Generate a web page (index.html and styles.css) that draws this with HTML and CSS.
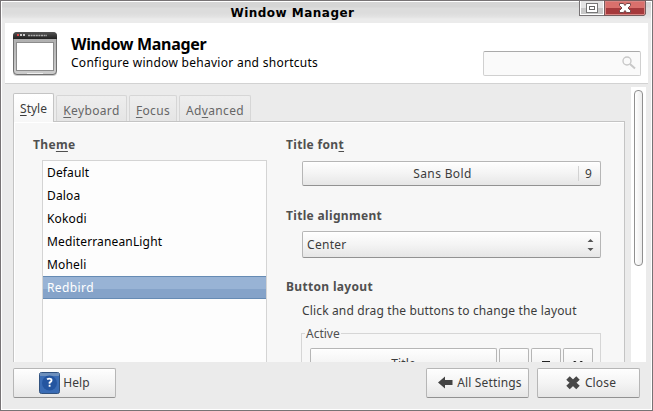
FILE: index.html
```html
<!DOCTYPE html>
<html lang="en">
<head>
<meta charset="utf-8">
<title>Window Manager</title>
<link rel="stylesheet" href="styles.css">
</head>
<body>
<div class="window">
  <header class="titlebar">
    <span class="caption">Window Manager</span>
    <div class="controls">
      <svg class="maximize" width="26" height="16" viewBox="0 0 26 16" shape-rendering="crispEdges">
        <rect width="26" height="16" fill="#777375"/><rect x="1" y="1" width="24" height="14" fill="#fff"/>
        <rect x="2" y="1" width="22" height="7" fill="#e4e4e4"/><rect x="2" y="8" width="22" height="6" fill="#c8c8c8"/>
        <rect x="7.500" y="3.500" width="11" height="9" fill="#fff" stroke="#777"/>
        <rect x="10.500" y="6.500" width="5" height="3" fill="#fff" stroke="#666"/>
      </svg>
      <svg class="close" width="42" height="16" viewBox="0 0 42 16">
        <path d="M0 0H42V14L40 16H0Z" fill="#765d5d"/>
        <path d="M1 1H41V14L40 15H1Z" fill="#d98583"/>
        <path d="M2 2H40V8H2Z" fill="#d9706c"/><path d="M2 8H40V14H2Z" fill="#a63a3c"/>
        <path d="M15.500 3.500h4l1.500 2 1.500-2h4v2L24 8l2.500 2.500v2h-4l-1.500-2-1.500 2h-4v-2L18 8 15.500 5.500z" fill="#fff" stroke="#74494b"/>
      </svg>
    </div>
  </header>
  <section class="heading">
    <svg class="app-icon" width="46" height="46" viewBox="0 0 46 46">
      <defs><linearGradient id="frame" x2="0" y2="1"><stop stop-color="#aaa"/><stop offset="1" stop-color="#ccc"/></linearGradient>
      <linearGradient id="bar" x2="0" y2="1"><stop stop-color="#555"/><stop offset="1" stop-color="#202020"/></linearGradient></defs>
      <rect x="1" y="1" width="44" height="44" rx="4" fill="#999" opacity=".5"/>
      <rect x="1.500" y="1.500" width="43" height="42" rx="3.500" fill="url(#frame)" stroke="#707070"/>
      <path d="M1 8V5q0-4 4-4H41q4 0 4 4v3z" fill="url(#bar)"/>
      <rect x="4.500" y="11.500" width="37" height="28" fill="#fff" stroke="#8c8c8c"/>
      <rect x="5" y="3" width="2" height="2" fill="#d44"/><rect x="8" y="3" width="2" height="2" fill="#ccc"/><rect x="11" y="3" width="2" height="2" fill="#ccc"/>
      <path d="M16 4.500H35" stroke="#aaa" stroke-width="1.400" stroke-dasharray="2 .6"/>
      <path d="M15 42.500H31" stroke="#eee"/>
    </svg>
    <div class="intro">
      <h1>Window Manager</h1>
      <p>Configure window behavior and shortcuts</p>
    </div>
    <div class="search">
      <svg width="16" height="16" viewBox="0 0 16 16" fill="none" stroke="#c8c8c8"><circle cx="6" cy="5" r="4" stroke-width="1.400"/><path d="M9 8l5 4.500" stroke-width="2"/></svg>
    </div>
  </section>
  <main class="viewport">
    <div class="notebook">
      <nav class="tabs">
        <span class="tab active"><u>S</u>tyle</span>
        <span class="tab keyboard"><u>K</u>eyboard</span>
        <span class="tab focus"><u>F</u>ocus</span>
        <span class="tab advanced">Ad<u>v</u>anced</span>
      </nav>
      <div class="page">
        <section class="themes">
          <h2>The<u>m</u>e</h2>
          <ul>
            <li>Default</li><li>Daloa</li><li>Kokodi</li><li>MediterraneanLight</li><li>Moheli</li><li class="selected">Redbird</li>
          </ul>
        </section>
        <section class="options">
          <h2>Title fon<u>t</u></h2>
          <div class="button font"><span class="font-name">Sans Bold</span><span class="font-size">9</span></div>
          <h2>Title alignment</h2>
          <div class="button combo"><span>Center</span>
            <svg width="7" height="12" viewBox="0 0 7 12" fill="#555"><path d="M3.500 0L6.500 3H.5zM.5 9H6.500L3.500 12z"/></svg>
          </div>
          <h2>Button layout</h2>
          <p class="hint">Click and drag the buttons to change the layout</p>
          <fieldset>
            <legend>Active</legend>
            <div class="slots">
              <span class="button slot title">Title</span>
              <span class="button slot"></span>
              <span class="button slot"><svg width="8" height="8" viewBox="0 0 8 8"><path d="M0 0H8V8H0z M1 2V7H7V2z" fill="#222" fill-rule="evenodd"/></svg></span>
              <span class="button slot"><svg width="10" height="9" viewBox="0 0 10 9"><path d="M1 0L9 8M9 0L1 8" stroke="#222" stroke-width="2"/></svg></span>
            </div>
          </fieldset>
        </section>
      </div>
    </div>
    <div class="scrollbar"><div class="thumb"></div></div>
  </main>
  <footer class="actions">
    <div class="button action help">
      <svg width="21" height="22" viewBox="0 0 21 22"><rect x=".5" y=".5" width="20" height="21" rx="2" fill="#3a6cb5" stroke="#31527f"/><path d="M1 1H20V4H1z" fill="#6c8fbd"/><circle cx="10.500" cy="11" r="7.500" fill="#2455a0"/><path d="M8 7.300q2.500-1.500 4.300 0 1 1.800-1.700 3.200v1.200M10.600 12.700v2" fill="none" stroke="#fff" stroke-width="1.800"/></svg>
      <span>Help</span>
    </div>
    <div class="button action all">
      <svg width="16" height="14" viewBox="0 0 16 14"><path d="M1 6.500L8 .5V4H15.500V9H8V12.500z" fill="#444"/></svg>
      <span>All Settings</span>
    </div>
    <div class="button action shut">
      <svg width="16" height="16" viewBox="0 0 16 16"><path d="M3 3L13 12.500M13 3L3 12.500" stroke="#484848" stroke-width="5"/></svg>
      <span>Close</span>
    </div>
  </footer>
</div>
</body>
</html>
```
FILE: styles.css
```css
* { box-sizing: border-box; }
body { margin: 0; font: 12px/16px "Noto Sans", "Open Sans", sans-serif; letter-spacing: .15px; color: #3c3c3c; overflow: hidden; }
h1, h2, p, ul, fieldset { margin: 0; padding: 0; }
svg { display: block; flex: none; }
u { text-decoration: underline; text-decoration-thickness: 1px; text-underline-offset: 2px; text-decoration-skip-ink: none; }
.window { width: 653px; height: 411px; border: 1px solid #777375; background: #ebebeb; box-shadow: inset 0 0 0 1px #fff; display: flex; flex-direction: column; }
.titlebar { position: relative; height: 22px; margin: 0 1px; background: linear-gradient(#fff 1px, #d5d5d5 1px 6px, #dcdcdc 7px 12px, #e3e3e3 16px, #ebebeb 18px); }
.caption { display: block; text-align: center; font: bold 12px/24px "DejaVu Sans", sans-serif; letter-spacing: .48px; color: #000; width: 581px; }
.controls { position: absolute; right: 5px; top: -1px; display: flex; }
.maximize { margin-right: -1px; }
.heading { margin: 0 4px; height: 61px; background: #fff; border-bottom: 1px solid #d2d2d2; display: flex; padding: 8px 7px 0 7px; color: #000; white-space: nowrap; }
.intro { margin-left: 13px; padding-top: 4px; flex: 1; }
.intro p { margin-top: 1px; letter-spacing: .28px; }
h1 { font-size: 16px; line-height: 19px; letter-spacing: -.32px; }
.search { width: 158px; height: 25px; margin-top: 20px; border: 1px solid #d0d0d0; border-top-color: #aaa; border-radius: 2px; background: #fafafa; display: flex; justify-content: flex-end; padding: 4px 3px; }
.viewport { height: 278px; overflow: hidden; display: flex; justify-content: space-between; padding: 3px 6px 0 12px; }
.notebook { width: 612px; padding-top: 6px; }
.tabs { display: flex; align-items: flex-end; height: 29px; position: relative; z-index: 1; color: #666; }
.tab { height: 26px; border: 1px solid #d6d6d6; border-bottom: 0; border-radius: 2px 2px 0 0; background: linear-gradient(#eee, #e5e5e5); line-height: 29px; text-align: center; margin-right: 2px; margin-bottom: 1px; white-space: nowrap; letter-spacing: .35px; }
.tab.active { width: 41px; height: 29px; margin-bottom: 0; background: linear-gradient(#fff, #f7f7f7); border-color: #c4c4c4; color: #3c3c3c; line-height: 29px; letter-spacing: 0; }
.keyboard { width: 71px; }
.focus { width: 48px; }
.advanced { width: 72px; }
.page { margin-top: -1px; height: 260px; border: 1px solid #c4c4c4; box-shadow: inset 1px 1px #fff; background: #f7f7f7; display: flex; padding: 15px 23px 0 19px; }
h2 { font-size: 12px; line-height: 16px; letter-spacing: .33px; color: #505050; white-space: nowrap; }
.themes { width: 234px; margin-right: 19px; }
.themes ul { margin: 7px 0 0 9px; height: 230px; border: 1px solid #d4d4d4; background: #fdfdfd; list-style: none; color: #000; }
.themes li { height: 23px; line-height: 23px; padding-left: 4px; }
.themes .selected { color: #fff; background: linear-gradient(#98b3d5 0 12px, #85a3c9 12px); border: solid #668bb4; border-width: 1px 0; line-height: 21px; letter-spacing: .4px; }
.options { flex: 1; white-space: nowrap; }
.button { border: 1px solid #b6b6b6; border-bottom-color: #929292; border-radius: 2px; background: linear-gradient(#fefefe, #f4f4f4 50%, #e6e6e6); box-shadow: inset 0 1px #fff; display: flex; align-items: center; }
.font { height: 25px; margin: 8px 0 22px 16px; }
.font-name { flex: 1; text-align: center; letter-spacing: .35px; padding-left: 4px; }
.font-size { width: 22px; height: 15px; line-height: 15px; border-left: 1px solid #d2d2d2; padding-left: 6px; }
.combo { height: 27px; margin: 7px 0 21px 16px; padding: 0 6px 0 4px; justify-content: space-between; letter-spacing: .3px; }
.hint { margin: 8px 0 6px 16px; }
fieldset { margin-left: 15px; border: 1px solid #d6d6d6; height: 60px; min-width: 0; }
legend { padding: 0 1px; margin-left: 3px; height: 16px; line-height: 18px; color: #505050; letter-spacing: 0; }
.slots { display: flex; gap: 2px; padding: 7px 7px 0 8px; }
.slot { width: 30px; height: 30px; padding-top: 4px; justify-content: center; }
.slot.title { width: 187px; padding-top: 2px; }
.actions { display: flex; padding: 6px 12px 0; }
.action { height: 30px; width: 103px; justify-content: center; white-space: nowrap; }
.action span { margin-left: 4px; }
.help { margin-right: auto; }
.help span { margin-left: 3px; }
.all { margin-right: 8px; }
.all, .shut { padding-left: 4px; }
.scrollbar { width: 15px; background: #fff; padding: 3px 3px 0; height: 275px; }
.thumb { width: 9px; height: 176px; border: 1px solid #909090; border-radius: 4px; background: linear-gradient(90deg, #fff, #ececec); }
```
